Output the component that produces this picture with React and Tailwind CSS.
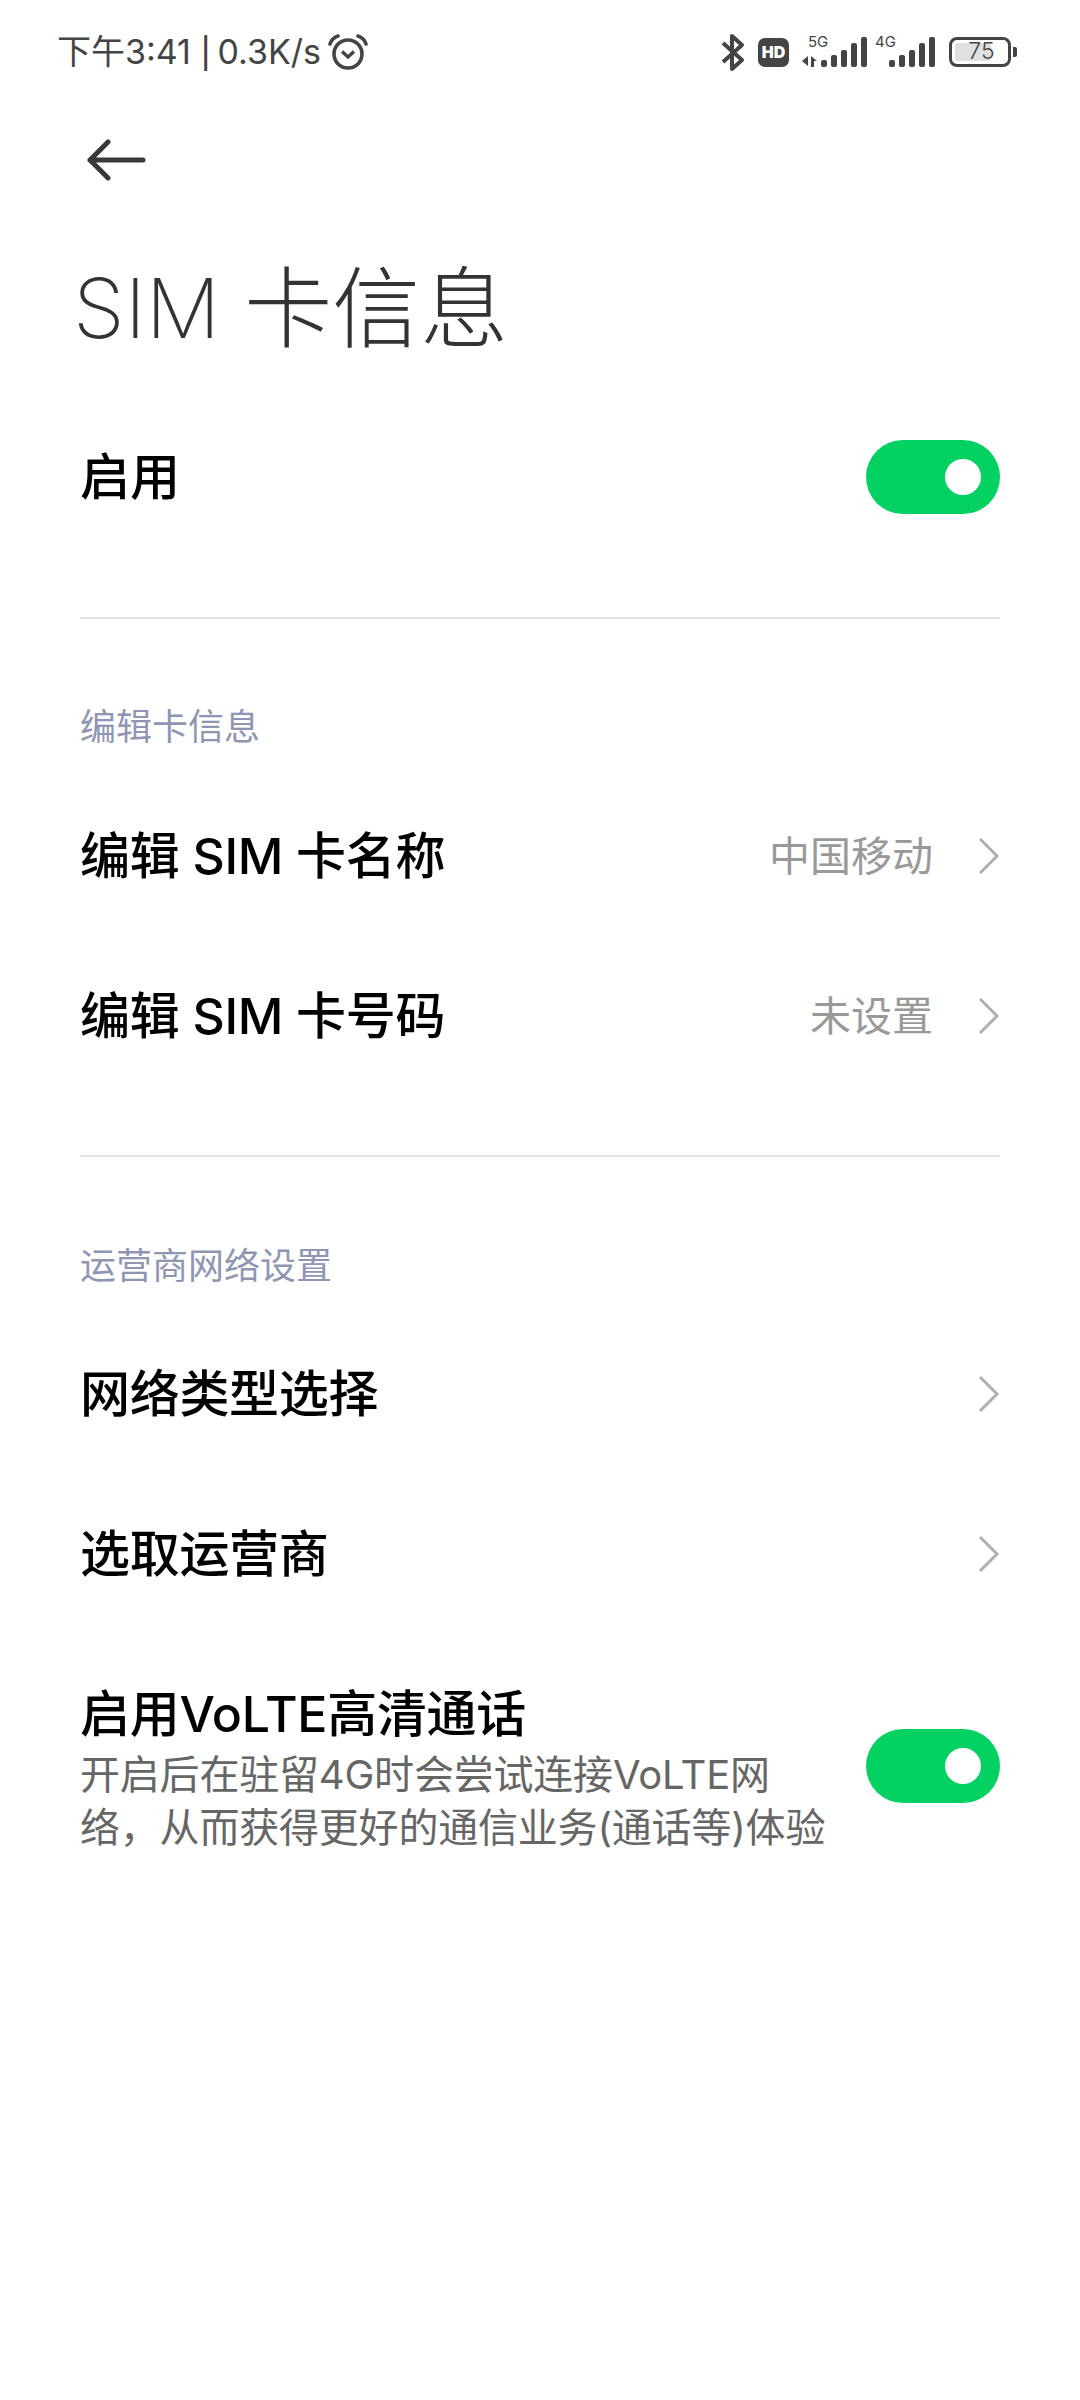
import React from "react";

const FONT = '"Inter", "Noto Sans CJK SC", sans-serif';

const Chevron = () => (
  <svg width="22" height="38" viewBox="0 0 22 38" className="ml-[45px] shrink-0">
    <path d="M2 2 L19 19 L2 36" fill="none" stroke="#b0b0b0" strokeWidth="3" />
  </svg>
);

// toggle is always on in the picture
const Toggle = () => (
  <div className="w-[134px] h-[74px] rounded-full bg-[#03d263] shrink-0 flex items-center justify-end pr-[19px]">
    <div className="w-[36px] h-[36px] rounded-full bg-white" />
  </div>
);

const NavRow = ({ title, value }) => (
  <div className="h-[160px] flex items-center justify-between">
    <span className="text-[50px] leading-[60px] tracking-[-0.3px] font-medium text-black">{title}</span>
    <div className="flex items-center">
      {value && <span className="text-[41px] leading-[50px] text-[#999999]">{value}</span>}
      <Chevron />
    </div>
  </div>
);

const SectionLabel = ({ children, className }) => (
  <div className={`text-[36px] leading-[44px] text-[#8f96b3] ${className}`}>{children}</div>
);

const Signal = ({ label, arrows, className, labelClass }) => (
  <div className={`relative h-[30px] flex items-end justify-end gap-[4px] ${className}`}>
    <span className={`absolute top-[-2px] text-[15px] leading-[14px] text-[#444444] ${labelClass}`}>{label}</span>
    {arrows && (
      <svg width="16" height="11" viewBox="0 0 16 11" className="absolute left-0 bottom-0">
        <path d="M0 5 L6 0 V10 Z M9 11 V0 L15 5 H12 V11 Z" fill="#444444" />
      </svg>
    )}
    {[7, 12, 17, 24, 30].map((h, i) => (
      <div key={i} style={{ height: h }} className="w-[6px] rounded-[2px] bg-[#444444]" />
    ))}
  </div>
);

const StatusBar = () => (
  <div className="h-[104px] pl-[57px] pr-[63px] flex items-center justify-between text-[#444444]">
    <div className="flex items-center">
      <span className="text-[34px] leading-[44px]">
        下午3:41 <span className="-mr-[3px] text-[30px] font-medium">|</span> 0.3K/s
      </span>
      <svg width="40" height="36" viewBox="0 0 40 36" className="ml-[7px]">
        <circle cx="20" cy="20" r="14" fill="none" stroke="#444444" strokeWidth="3.6" />
        <path d="M14 17.5 L20 23 L26 17.5" fill="none" stroke="#444444" strokeWidth="3.4" />
        <path d="M2 10 Q4 4 10 2 M38 10 Q36 4 30 2" fill="none" stroke="#444444" strokeWidth="3.6" strokeLinecap="round" />
      </svg>
    </div>
    <div className="flex items-center">
      <svg width="24" height="39" viewBox="0 0 24 39">
        <path d="M2 10 L21 27 L11 36 V3 L21 12 L2 29" fill="none" stroke="#444444" strokeWidth="4" strokeLinejoin="round" />
      </svg>
      <div className="ml-[13px] w-[31px] h-[29px] rounded-[7px] bg-[#444444] text-white text-[16px] leading-[29px] font-black text-center">HD</div>
      <Signal label="5G" arrows className="ml-[13px] w-[65px]" labelClass="left-[6px]" />
      <Signal label="4G" className="ml-[8px] w-[60px]" labelClass="left-0" />
      <div className="ml-[14px] w-[62px] h-[30px] rounded-[8px] border-[3.5px] border-[#444444] py-[3px] px-[3px] relative">
        <div className="h-full w-[72%] rounded-[3px] bg-[#e0e0e0]" />
        <span className="absolute inset-0 pl-[3px] text-center text-[23px] leading-[23px] font-light text-[#444444]">75</span>
      </div>
      <div className="ml-[2px] w-[4px] h-[10px] rounded-r-[2px] bg-[#444444]" />
    </div>
  </div>
);

export default function App() {
  return (
    <div className="w-[1080px] h-[2400px] bg-white overflow-hidden" style={{ fontFamily: FONT }}>
      <StatusBar />
      <div className="h-[112px] pl-[87px] flex items-center">
        <svg width="60" height="42" viewBox="0 0 60 42">
          <path d="M56 21 H3 M21 3 L3 21 L21 39" fill="none" stroke="#383838" strokeWidth="5" strokeLinecap="round" strokeLinejoin="round" />
        </svg>
      </div>
      <div className="pl-[73px] h-[96px] mt-[44px] flex items-center font-extralight text-[#333333]">
        <span className="text-[83px] leading-[96px]">SIM</span>
        <span className="ml-[24px] text-[88px] leading-[96px] font-light">卡信息</span>
      </div>
      <div className="px-[80px]">
        <div className="mt-[56px] h-[130px] flex items-center justify-between">
          <span className="text-[50px] leading-[60px] font-medium text-black">启用</span>
          <Toggle />
        </div>
        <div className="mt-[75px] h-[2px] bg-[#e3e3e3]" />
        <SectionLabel className="mt-[86px] mb-[27px]">编辑卡信息</SectionLabel>
        <NavRow title="编辑 SIM 卡名称" value="中国移动" />
        <NavRow title="编辑 SIM 卡号码" value="未设置" />
        <div className="mt-[59px] h-[2px] bg-[#e3e3e3]" />
        <SectionLabel className="mt-[87px] mb-[26px]">运营商网络设置</SectionLabel>
        <NavRow title="网络类型选择" />
        <NavRow title="选取运营商" />
        <div className="mt-[50px] flex items-center justify-between">
          <div className="w-[750px]">
            <div className="text-[50px] leading-[60px] tracking-[-0.3px] font-medium text-black">启用VoLTE高清通话</div>
            <div className="mt-[4px] text-[40px] leading-[53px] tracking-[-0.2px] text-[#666666]">
              开启后在驻留4G时会尝试连接VoLTE网络，从而获得更好的通信业务(通话等)体验
            </div>
          </div>
          <div className="mb-[6px]">
            <Toggle />
          </div>
        </div>
      </div>
    </div>
  );
}
